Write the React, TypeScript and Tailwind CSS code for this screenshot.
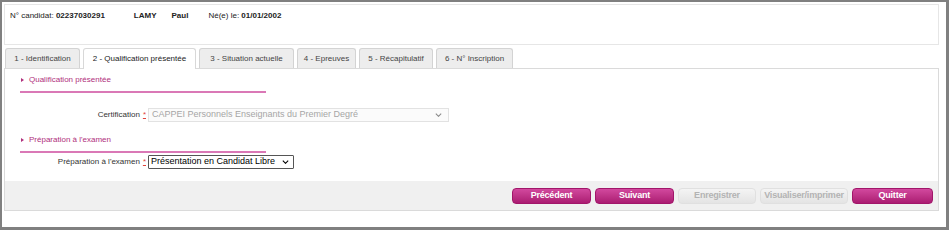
import React from 'react';

const TABS = [
  { label: '1 - Identification', w: 'w-[75px]' },
  { label: '2 - Qualification présentée', w: 'w-[113px]', active: true },
  { label: '3 - Situation actuelle', w: 'w-[95px]' },
  { label: '4 - Epreuves', w: 'w-[59px]' },
  { label: '5 - Récapitulatif', w: 'w-[74px]' },
  { label: '6 - N° Inscription', w: 'w-[77px]' },
];

function Chevron({ className }: { className: string }) {
  return (
    <svg viewBox="0 0 10 6" className={className} fill="none" stroke="currentColor" strokeWidth="1.6">
      <path d="M1 1l4 4 4-4" />
    </svg>
  );
}

function Required() {
  return <span className="ml-[3px] text-[#e0443c] underline decoration-[#e0443c]">*</span>;
}

function SectionTitle({ children, className }: { children: React.ReactNode; className: string }) {
  return (
    <div className={`ml-[15px] w-[246px] pb-[5px] ${className}`}>
      <div className="flex items-center text-[8px] leading-[10px] text-[#b02f7c]">
        <span className="ml-[1px] mr-[5px] inline-block h-0 w-0 border-y-[2.5px] border-l-[3px] border-y-transparent border-l-[#b02f7c]" />
        {children}
      </div>
      <div className="mt-[6px] h-[2px] bg-[#da78b6]" />
    </div>
  );
}

function Btn({ label, w, disabled }: { label: string; w: string; disabled?: boolean }) {
  return (
    <button
      className={`${w} flex h-[16px] items-center justify-center rounded-[4px] text-[9px] font-bold tracking-[-0.2px] ${
        disabled
          ? 'border border-[#e0e0e0] bg-gradient-to-b from-[#f4f4f4] to-[#e4e4e4] text-[#b3b3b3]'
          : 'border border-[#a1166a] bg-gradient-to-b from-[#d2489e] to-[#ab1b72] text-white'
      }`}
    >
      {label}
    </button>
  );
}

export default function App() {
  return (
    <div
      className="h-[230px] w-[949px] border-b-[3px] border-l-2 border-r-[3px] border-t-2 border-[#808080] bg-white pl-[2px] pr-[7px] pt-[2px] text-[#333]"
      style={{ fontFamily: '"Liberation Sans", Arial, sans-serif' }}
    >
      {/* Candidate header */}
      <div className="flex h-[41px] border border-[#e6e6e6] pl-[5px] pt-[6px] text-[8px] leading-[10px] text-[#222]">
        <span>
          N° candidat: <b>02237030291</b>
        </span>
        <b className="ml-[29px]">LAMY</b>
        <b className="ml-[15px]">Paul</b>
        <span className="ml-[20px]">
          Né(e) le: <b>01/01/2002</b>
        </span>
      </div>

      {/* Tabs */}
      <div className="mt-[3px] flex gap-[3px] pl-[1px]">
        {TABS.map((t) => (
          <div
            key={t.label}
            className={`${t.w} relative flex h-[20px] items-center justify-center rounded-t-[3px] border border-b-0 text-[8px] ${
              t.active
                ? 'z-10 -mb-px h-[21px] border-[#d8d8d8] bg-white pb-px text-[#222]'
                : 'border-[#d3d3d3] bg-[#ededed] text-[#444]'
            }`}
          >
            {t.label}
          </div>
        ))}
      </div>

      {/* Panel */}
      <div className="border border-[#dadada]">
        <SectionTitle className="pt-[6px]">Qualification présentée</SectionTitle>

        <div className="mt-[10px] flex items-center">
          <div className="w-[141px] text-right text-[8px] text-[#333]">
            Certification
            <Required />
          </div>
          <div className="ml-[2px] flex h-[14px] w-[301px] items-center justify-between border border-[#e2e2e2] bg-[#fbfbfb] pl-[3px] pr-[6px] text-[9px] text-[#a6a6a6]">
            <span>CAPPEI Personnels Enseignants du Premier Degré</span>
            <Chevron className="h-[4px] w-[7px] text-[#8a8a8a]" />
          </div>
        </div>

        <SectionTitle className="mt-[13px]">Préparation à l'examen</SectionTitle>

        <div className="-mt-[3px] flex items-center">
          <div className="w-[141px] text-right text-[8px] text-[#333]">
            Préparation à l'examen
            <Required />
          </div>
          <div className="ml-[2px] flex h-[14px] w-[146px] items-center justify-between rounded-[1px] border border-[#555] bg-white pl-[2px] pr-[4px] text-[9px] text-black">
            <span>Présentation en Candidat Libre</span>
            <Chevron className="h-[4px] w-[7px] text-black" />
          </div>
        </div>

        {/* Footer actions */}
        <div className="mt-[12px] flex h-[29px] justify-end gap-[4px] bg-[#f0f0f0] pr-[5px] pt-[7px]">
          <Btn label="Précédent" w="w-[79px]" />
          <Btn label="Suivant" w="w-[79px]" />
          <Btn label="Enregistrer" w="w-[78px]" disabled />
          <Btn label="Visualiser/imprimer" w="w-[88px]" disabled />
          <Btn label="Quitter" w="w-[81px]" />
        </div>
      </div>
    </div>
  );
}
